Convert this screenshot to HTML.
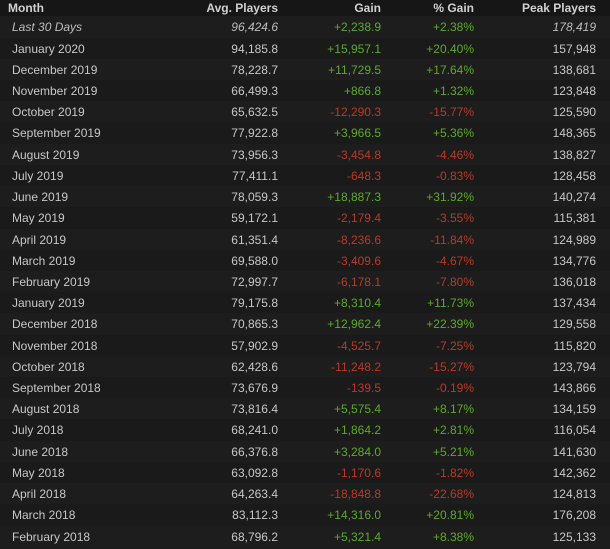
<!DOCTYPE html><html><head><style>
body{margin:0;background:#1b1b1b;width:610px;height:549px;overflow:hidden;font-family:"Liberation Sans",Arial,sans-serif;font-size:12px;color:#c7c7c7}
.r{position:absolute;left:0;width:610px;height:22.2px;line-height:22px}
.r span{position:absolute;white-space:nowrap}
.m{left:12px}.a{right:332px}.g{right:229px}.p{right:136px}.k{right:14px}
.h{top:0;height:16px;line-height:16px;background:#161616;font-weight:bold;color:#d0d0d0}
.h .m{left:8px}
.o{background:#1d1d1d}.e{background:#1a1a1a}
.G{color:#5fa82c}.R{color:#b93a28}
.i{font-style:italic;color:#bdbdbd}
</style></head><body>
<div class="r h"><span class="m">Month</span><span class="a">Avg. Players</span><span class="g">Gain</span><span class="p">% Gain</span><span class="k">Peak Players</span></div>
<div id="t"></div>
<script>
var d=[["Last 30 Days","96,424.6","+2,238.9","+2.38%","178,419"],["January 2020","94,185.8","+15,957.1","+20.40%","157,948"],["December 2019","78,228.7","+11,729.5","+17.64%","138,681"],["November 2019","66,499.3","+866.8","+1.32%","123,848"],["October 2019","65,632.5","-12,290.3","-15.77%","125,590"],["September 2019","77,922.8","+3,966.5","+5.36%","148,365"],["August 2019","73,956.3","-3,454.8","-4.46%","138,827"],["July 2019","77,411.1","-648.3","-0.83%","128,458"],["June 2019","78,059.3","+18,887.3","+31.92%","140,274"],["May 2019","59,172.1","-2,179.4","-3.55%","115,381"],["April 2019","61,351.4","-8,236.6","-11.84%","124,989"],["March 2019","69,588.0","-3,409.6","-4.67%","134,776"],["February 2019","72,997.7","-6,178.1","-7.80%","136,018"],["January 2019","79,175.8","+8,310.4","+11.73%","137,434"],["December 2018","70,865.3","+12,962.4","+22.39%","129,558"],["November 2018","57,902.9","-4,525.7","-7.25%","115,820"],["October 2018","62,428.6","-11,248.2","-15.27%","123,794"],["September 2018","73,676.9","-139.5","-0.19%","143,866"],["August 2018","73,816.4","+5,575.4","+8.17%","134,159"],["July 2018","68,241.0","+1,864.2","+2.81%","116,054"],["June 2018","66,376.8","+3,284.0","+5.21%","141,630"],["May 2018","63,092.8","-1,170.6","-1.82%","142,362"],["April 2018","64,263.4","-18,848.8","-22.68%","124,813"],["March 2018","83,112.3","+14,316.0","+20.81%","176,208"],["February 2018","68,796.2","+5,321.4","+8.38%","125,133"]];
var h="";d.forEach(function(r,i){var c=r[2][0]=="+"?"G":"R",it=i==0?" i":"";
h+='<div class="r '+(i%2?"e":"o")+'" style="top:'+(16.3+i*21.22).toFixed(2)+'px"><span class="m'+it+'">'+r[0]+'</span><span class="a'+it+'">'+r[1]+'</span><span class="g '+c+'">'+r[2]+'</span><span class="p '+c+'">'+r[3]+'</span><span class="k'+it+'">'+r[4]+'</span></div>';});
document.getElementById("t").innerHTML=h;
</script></body></html>
